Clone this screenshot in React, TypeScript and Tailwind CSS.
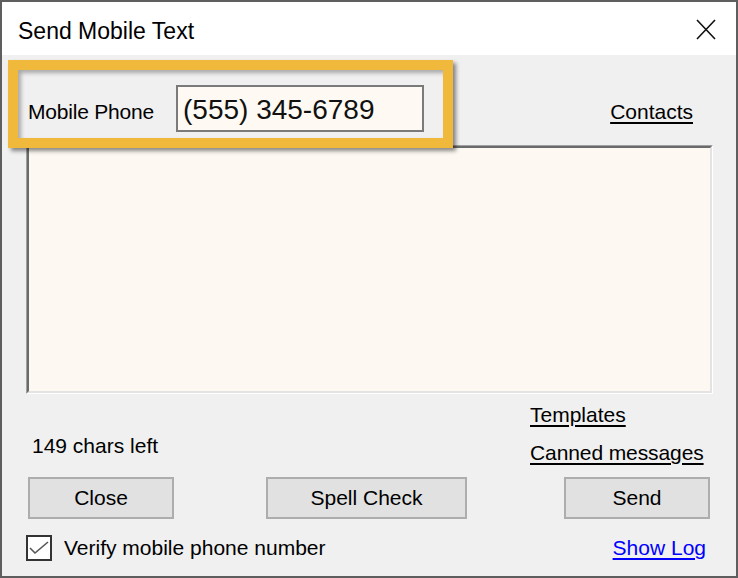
import React from "react";

const font = { fontFamily: '"Liberation Sans", Arial, sans-serif' };

function WinButton({ label, width }: { label: string; width: string }) {
  return (
    <button
      className={`${width} h-[42px] border-2 border-[#adadad] bg-[#e1e1e1] text-[21px] leading-[24px] text-black flex items-center justify-center`}
    >
      {label}
    </button>
  );
}

export default function App() {
  return (
    <div className="w-[738px] h-[578px] bg-white" style={font}>
      <div className="relative w-[738px] h-[578px] border-2 border-[#5e5e5e] bg-[#f0f0f0] flex flex-col text-black">
        {/* title bar */}
        <div className="h-[53px] bg-white flex items-start justify-between shrink-0">
          <div className="pl-[16px] pt-[16px] text-[23px] leading-[26px]">Send Mobile Text</div>
          <svg className="mt-[17px] mr-[20px]" width="20" height="21" viewBox="0 0 20 21">
            <path d="M1 1 L19 20 M19 1 L1 20" stroke="#111" strokeWidth="1.6" fill="none" />
          </svg>
        </div>

        {/* phone row */}
        <div className="mt-[30px] h-[47px] flex items-start pl-[26px] pr-[43px]">
          <div className="w-[148px] mt-[15px] text-[21px] leading-[24px] tracking-[-0.2px]">Mobile Phone</div>
          <div className="w-[248px] h-[47px] border-2 border-[#7a7a7a] bg-[#fefaf3] pl-[5px] pt-[7px] text-[28px] leading-[32px] text-[#111]">
            (555) 345-6789
          </div>
          <a className="ml-auto mt-[15px] text-[21px] leading-[24px] underline underline-offset-[3px] decoration-[2px]">
            Contacts
          </a>
        </div>

        {/* message box */}
        <div className="mt-[13px] ml-[24px] w-[687px] h-[249px] border border-t-[#a0a0a0] border-l-[#a0a0a0] border-r-white border-b-white">
          <div className="w-full h-full border-2 border-t-[#6b6b6b] border-l-[#6b6b6b] border-r-[#e3e3e3] border-b-[#e3e3e3] bg-[#fdf9f2]" />
        </div>

        {/* counters and links */}
        <div className="h-[71px] flex pl-[30px]">
          <div className="w-[498px] pt-[40px] text-[21px] leading-[24px]">149 chars left</div>
          <div className="flex flex-col pt-[9px] gap-[14px] text-[21px] leading-[24px]">
            <a className="underline underline-offset-[3px] decoration-[2px]">Templates</a>
            <a className="underline underline-offset-[3px] decoration-[2px] tracking-[-0.1px]">Canned messages</a>
          </div>
        </div>

        {/* buttons */}
        <div className="mt-[12px] flex pl-[26px]">
          <WinButton label="Close" width="w-[146px]" />
          <div className="ml-[92px]">
            <WinButton label="Spell Check" width="w-[201px]" />
          </div>
          <div className="ml-[97px]">
            <WinButton label="Send" width="w-[146px]" />
          </div>
        </div>

        {/* verify row */}
        <div className="mt-[16px] flex items-center pl-[24px] pr-[30px]">
          <div className="w-[26px] h-[26px] border-2 border-[#333] bg-white flex items-center justify-center">
            <svg width="22" height="22" viewBox="0 0 22 22">
              <path d="M2 11 L7 16 L20 5" stroke="#555" strokeWidth="1.6" fill="none" />
            </svg>
          </div>
          <span className="ml-[12px] text-[21px] leading-[24px]">Verify mobile phone number</span>
          <a className="ml-auto text-[21px] leading-[24px] text-[#0000ff] underline underline-offset-[3px]">Show Log</a>
        </div>

        {/* highlight annotation */}
        <div className="pointer-events-none absolute left-[6px] top-[58px] w-[445px] h-[88px] border-[10px] border-[#f1b93b] shadow-[3px_3px_4px_rgba(0,0,0,0.45),inset_3px_3px_4px_rgba(0,0,0,0.3)]" />
      </div>
    </div>
  );
}
